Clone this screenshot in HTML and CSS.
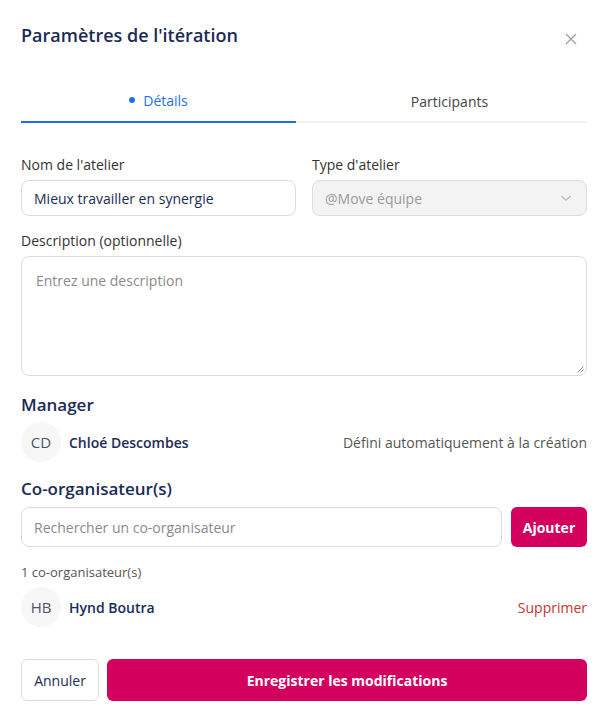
FILE: index.html
```html
<!DOCTYPE html>
<html lang="fr">
<head>
<meta charset="utf-8">
<title>Paramètres de l'itération</title>
<link rel="stylesheet" href="styles.css">
</head>
<body>
<div class="modal">
  <header class="modal-header">
    <h1 class="modal-title">Paramètres de l'itération</h1>
    <button class="close-btn" aria-label="Fermer">
      <svg width="12" height="12" viewBox="0 0 12 12"><path d="M1 1L11 11M11 1L1 11" stroke="#9aa0a8" stroke-width="1.3" fill="none"/></svg>
    </button>
  </header>

  <nav class="tabs">
    <div class="tab active"><span class="dot"></span>Détails</div>
    <div class="tab">Participants</div>
  </nav>

  <div class="row two-cols">
    <div class="field">
      <label class="label">Nom de l'atelier</label>
      <div class="input value">Mieux travailler en synergie</div>
    </div>
    <div class="field">
      <label class="label">Type d'atelier</label>
      <div class="input select disabled">
        <span>@Move équipe</span>
        <svg width="12" height="8" viewBox="0 0 12 8"><path d="M1.5 2L6 6.2L10.5 2" stroke="#b5b8bd" stroke-width="1.1" fill="none"/></svg>
      </div>
    </div>
  </div>

  <div class="field desc-field">
    <label class="label">Description (optionnelle)</label>
    <div class="textarea">
      <span class="placeholder">Entrez une description</span>
      <svg class="grip" width="8" height="8" viewBox="0 0 8 8"><path d="M7.5 1.5L1.5 7.5M7.5 4.5L4.5 7.5" stroke="#888" stroke-width="1" fill="none"/></svg>
    </div>
  </div>

  <section class="section">
    <h2 class="section-title">Manager</h2>
    <div class="person">
      <div class="avatar">CD</div>
      <div class="person-name">Chloé Descombes</div>
      <div class="person-meta">Défini automatiquement à la création</div>
    </div>
  </section>

  <section class="section co">
    <h2 class="section-title">Co-organisateur(s)</h2>
    <div class="search-row">
      <div class="input search"><span class="placeholder">Rechercher un co-organisateur</span></div>
      <button class="btn btn-primary add">Ajouter</button>
    </div>
    <div class="count">1 co-organisateur(s)</div>
    <div class="person">
      <div class="avatar">HB</div>
      <div class="person-name">Hynd Boutra</div>
      <div class="person-remove">Supprimer</div>
    </div>
  </section>

  <footer class="footer">
    <button class="btn btn-secondary">Annuler</button>
    <button class="btn btn-primary save">Enregistrer les modifications</button>
  </footer>
</div>
</body>
</html>
```

FILE: styles.css
```css
* { box-sizing: border-box; }
html, body { margin: 0; padding: 0; background: #fff; }
body {
  font-family: "Open Sans", "Lato", sans-serif;
  color: #333;
  width: 606px;
  height: 723px;
  overflow: hidden;
}
.modal { padding: 23px 19px 0 21px; }

.modal-header {
  display: flex;
  justify-content: space-between;
  align-items: flex-start;
  height: 49px;
}
.modal-title {
  margin: 0;
  font-size: 18px;
  font-weight: 600;
  color: #1c2b55;
  line-height: 24px;
}
.close-btn {
  border: 0; background: none; padding: 0;
  margin: 10px 10px 0 0;
  width: 12px; height: 12px;
  display: flex;
}

.tabs {
  display: grid;
  grid-template-columns: 1fr 1fr;
  gap: 16px;
  margin-top: 7px;
  border-bottom: 2px solid #f3f3f3;
}
.tab {
  display: flex;
  justify-content: center;
  align-items: center;
  gap: 8px;
  height: 44px;
  margin-bottom: -2px;
  font-size: 14px;
  color: #444;
}
.tab.active {
  color: #1f6fe8;
  border-bottom: 2px solid #1f6fe8;
  font-weight: 500;
}
.dot { width: 6px; height: 6px; border-radius: 50%; background: #1f6fe8; }

.row.two-cols {
  display: grid;
  grid-template-columns: 1fr 1fr;
  gap: 16px;
  margin-top: 33px;
}
.field { display: flex; flex-direction: column; }
.label {
  font-size: 14px;
  color: #333;
  line-height: 18px;
  margin-bottom: 6px;
}
.input {
  height: 36px;
  border: 1px solid #dcdcdc;
  border-radius: 8px;
  padding: 0 12px;
  display: flex;
  align-items: center;
  font-size: 14px;
}
.input.value { color: #1c2b55; }
.input.select { justify-content: space-between; padding-right: 14px; }
.input.disabled { background: #f3f3f3; color: #9a9a9a; }
.placeholder { color: #8a8a8a; font-size: 14px; }

.desc-field { margin-top: 16px; }
.textarea {
  position: relative;
  height: 120px;
  border: 1px solid #dcdcdc;
  border-radius: 8px;
  padding: 14px 14px;
  line-height: 18px;
}
.grip { position: absolute; right: 2px; bottom: 2px; }

.section { margin-top: 18px; }
.section.co { margin-top: 16px; }
.section-title {
  margin: 0;
  font-size: 17px;
  font-weight: 600;
  color: #1c2b55;
  line-height: 22px;
}
.person {
  display: flex;
  align-items: center;
  margin-top: 6px;
  height: 40px;
  font-size: 14px;
}
.avatar {
  width: 40px; height: 40px;
  border-radius: 50%;
  background: #f7f7f7;
  display: flex; align-items: center; justify-content: center;
  color: #4b5563;
  font-size: 15px;
  font-weight: 400;
  margin-right: 8px;
}
.person-name { font-weight: 600; color: #1c2b55; flex: 1; }
.person-meta { color: #555; }
.person-remove { color: #c8322f; }

.search-row { display: flex; gap: 9px; margin-top: 7px; }
.input.search { flex: 1; height: 40px; }
.btn {
  font-family: inherit;
  border-radius: 6px;
  font-size: 14px;
  cursor: pointer;
}
.btn-primary {
  background: #d4005e;
  color: #fff;
  border: 0;
  font-weight: 700;
}
.add { width: 76px; height: 40px; }
.count { font-size: 13px; color: #555; margin-top: 17px; line-height: 16px; }
.section.co .person { margin-top: 7px; }

.footer { display: flex; gap: 8px; margin-top: 32px; }
.btn-secondary {
  background: #fff;
  border: 1px solid #dcdcdc;
  color: #1c2b55;
  width: 78px;
  height: 42px;
  font-weight: 400;
}
.save { flex: 1; height: 42px; }
```
